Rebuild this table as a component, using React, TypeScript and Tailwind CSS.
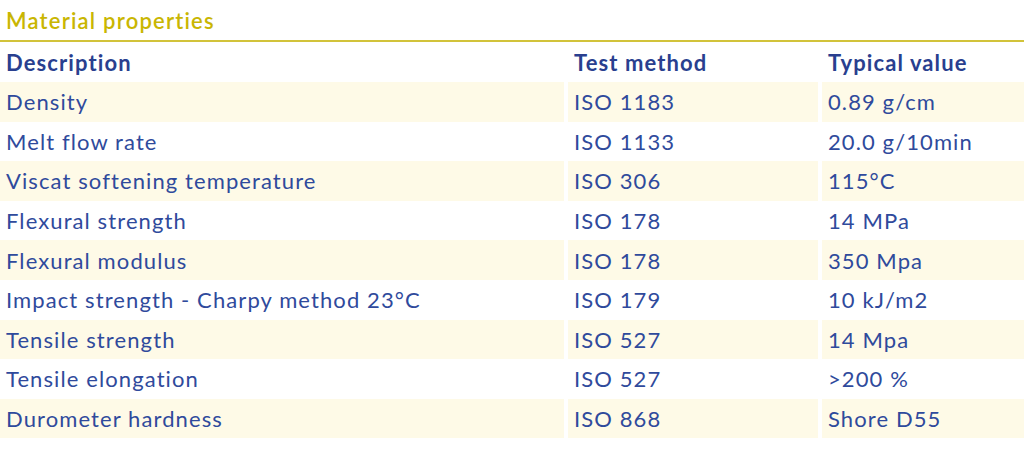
const rows: [string, string, string][] = [
  ["Density", "ISO 1183", "0.89 g/cm"],
  ["Melt flow rate", "ISO 1133", "20.0 g/10min"],
  ["Viscat softening temperature", "ISO 306", "115°C"],
  ["Flexural strength", "ISO 178", "14 MPa"],
  ["Flexural modulus", "ISO 178", "350 Mpa"],
  ["Impact strength - Charpy method 23°C", "ISO 179", "10 kJ/m2"],
  ["Tensile strength", "ISO 527", "14 Mpa"],
  ["Tensile elongation", "ISO 527", ">200 %"],
  ["Durometer hardness", "ISO 868", "Shore D55"],
];

const headers = ["Description", "Test method", "Typical value"];

export default function App() {
  return (
    <div className="h-[453px] w-[1024px] bg-white font-['Lato','Noto_Sans',sans-serif] text-[#2f4a9c]">
      <h2 className="flex h-[40px] items-center px-[6px] text-[22px] font-semibold tracking-[1.2px] text-[#c9b602]">
        Material properties
      </h2>
      <div className="h-[2px] bg-[#d2c33a]" />

      <div className="grid grid-cols-[564px_250px_1fr] gap-x-[4px]">
        {headers.map((h) => (
          <div key={h} className="flex h-[40px] items-center px-[6px] text-[22px] font-bold tracking-[1.1px] text-[#293f8f]">
            {h}
          </div>
        ))}

        {rows.map((r, i) =>
          r.map((cell, j) => (
            <div
              key={`${i}-${j}`}
              className={`flex h-[39.6px] items-center px-[6px] text-[22px] tracking-[1.1px] ${i % 2 === 0 ? "bg-[#fefae7]" : "bg-white"}`}
            >
              {cell}
            </div>
          ))
        )}
      </div>
    </div>
  );
}
